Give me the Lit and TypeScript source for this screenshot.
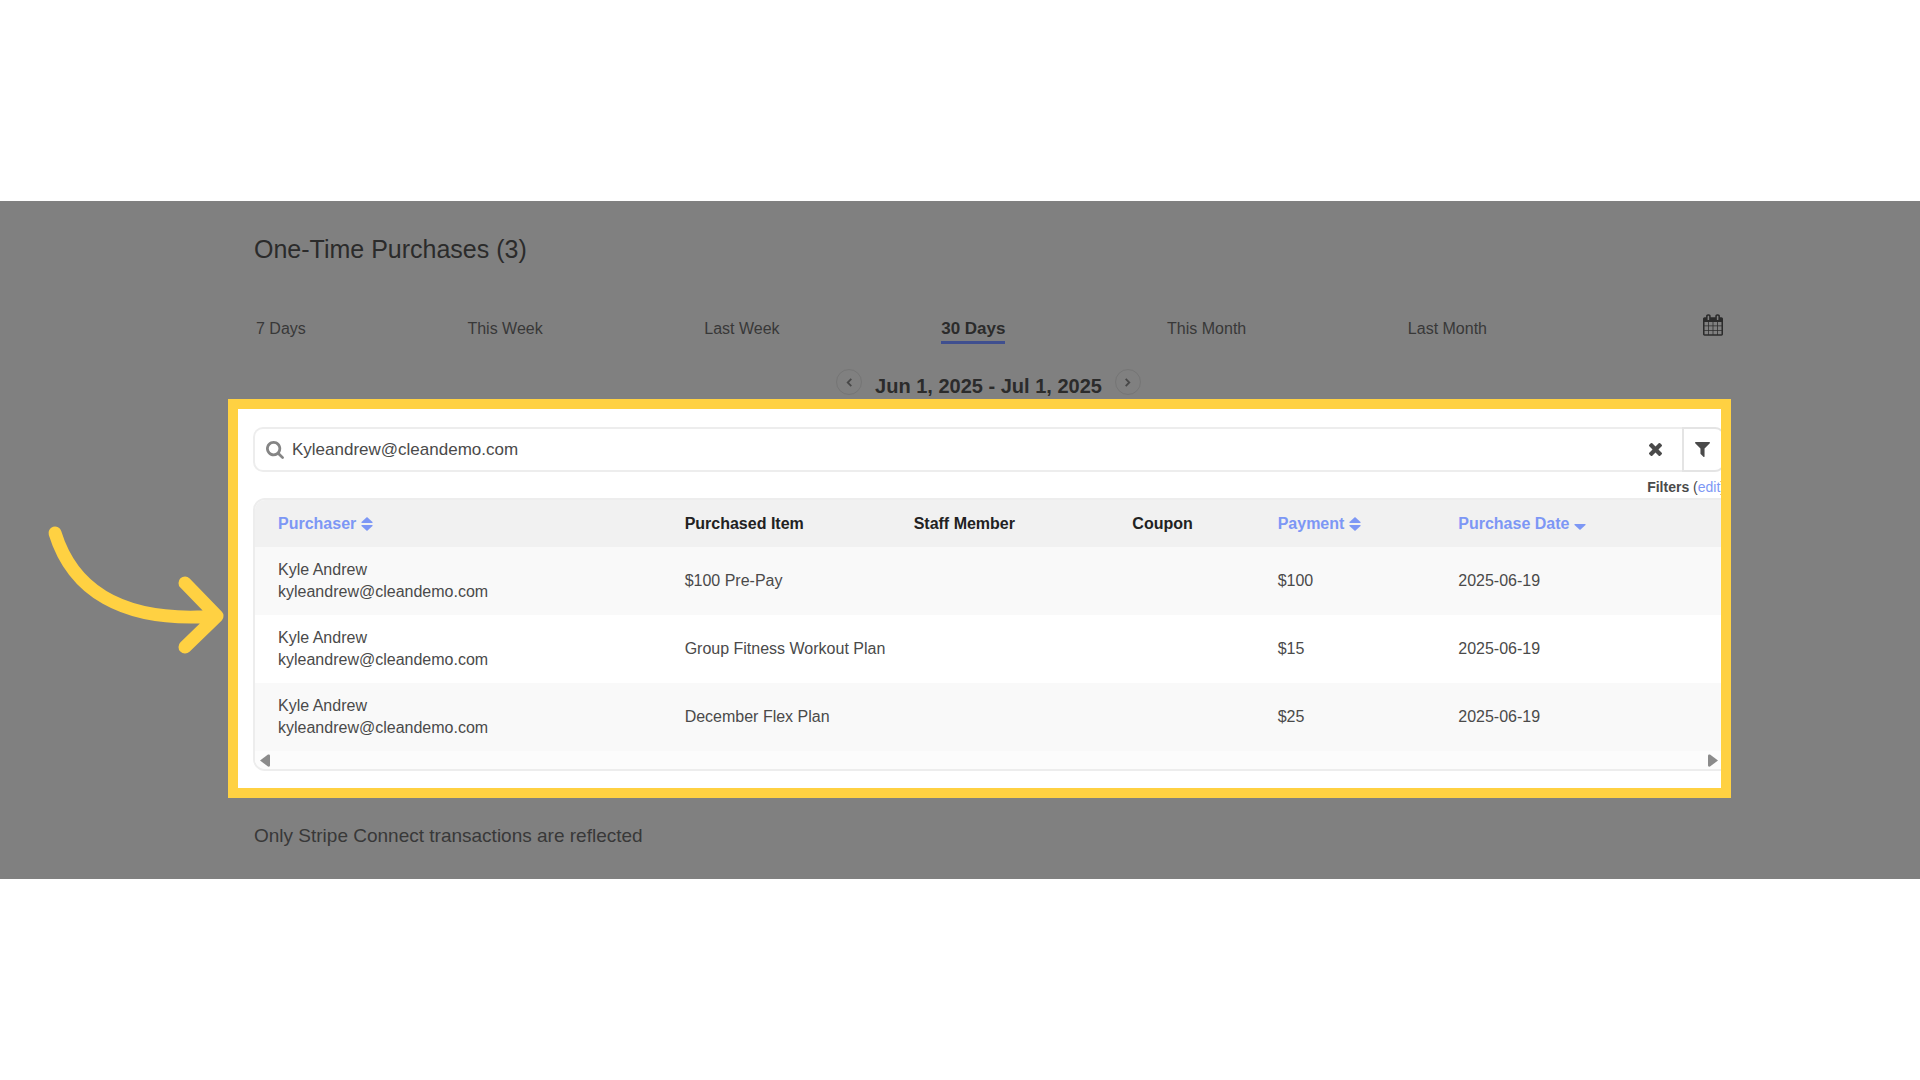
import { LitElement, html, css, svg, nothing } from "lit";
import { customElement, state } from "lit/decorators.js";
import { classMap } from "lit/directives/class-map.js";

interface Purchase {
  name: string;
  email: string;
  item: string;
  staff: string;
  coupon: string;
  payment: string;
  date: string;
}

interface Column {
  label: string;
  size: string;
  sort?: "both" | "down";
}

const RANGES = ["7 Days", "This Week", "Last Week", "30 Days", "This Month", "Last Month"];

const COLUMNS: Column[] = [
  { label: "Purchaser", size: "purchaser", sort: "both" },
  { label: "Purchased Item", size: "item" },
  { label: "Staff Member", size: "staff" },
  { label: "Coupon", size: "coupon" },
  { label: "Payment", size: "payment", sort: "both" },
  { label: "Purchase Date", size: "date", sort: "down" },
];

const person = { name: "Kyle Andrew", email: "kyleandrew@cleandemo.com", staff: "", coupon: "", date: "2025-06-19" };

const PURCHASES: Purchase[] = [
  { ...person, item: "$100 Pre-Pay", payment: "$100" },
  { ...person, item: "Group Fitness Workout Plan", payment: "$15" },
  { ...person, item: "December Flex Plan", payment: "$25" },
];

const calendarIcon = html`<svg class="icon calendar" viewBox="0 0 1664 1792" aria-hidden="true">
  <path d="M128 1664h288v-288h-288v288zm352 0h320v-288h-320v288zm-352-352h288v-320h-288v320zm352 0h320v-320h-320v320zm-352-384h288v-288h-288v288zm736 736h320v-288h-320v288zm-384-736h320v-288h-320v288zm768 736h288v-288h-288v288zm-384-352h320v-320h-320v320zm-352-864v-288q0-13-9.500-22.500t-22.500-9.500h-64q-13 0-22.500 9.500t-9.500 22.500v288q0 13 9.500 22.500t22.500 9.500h64q13 0 22.500-9.500t9.500-22.500zm736 864h288v-320h-288v320zm-384-384h320v-288h-320v288zm384 0h288v-288h-288v288zm32-480v-288q0-13-9.500-22.500t-22.500-9.500h-64q-13 0-22.500 9.500t-9.500 22.500v288q0 13 9.500 22.500t22.500 9.500h64q13 0 22.500-9.500t9.500-22.500zm384-64v1280q0 52-38 90t-90 38h-1408q-52 0-90-38t-38-90v-1280q0-52 38-90t90-38h128v-96q0-66 47-113t113-47h64q66 0 113 47t47 113v96h384v-96q0-66 47-113t113-47h64q66 0 113 47t47 113v96h128q52 0 90 38t38 90z"/>
</svg>`;

const searchIcon = html`<svg class="icon search" viewBox="64 128 1664 1664" aria-hidden="true">
  <path d="M1216 832q0-185-131.500-316.500t-316.500-131.500-316.500 131.500-131.500 316.500 131.500 316.500 316.500 131.500 316.500-131.500 131.500-316.500zm512 832q0 52-38 90t-90 38q-54 0-90-38l-343-342q-179 124-399 124-143 0-273.500-55.500t-225-150-150-225-55.500-273.500 55.500-273.500 150-225 225-150 273.500-55.500 273.500 55.500 225 150 150 225 55.500 273.500q0 220-124 399l343 343q37 37 37 90z"/>
</svg>`;

const clearIcon = html`<svg class="icon clear" viewBox="302 366 1188 1188" aria-hidden="true">
  <path d="M1490 1322q0 40-28 68l-136 136q-28 28-68 28t-68-28l-294-294-294 294q-28 28-68 28t-68-28l-136-136q-28-28-28-68t28-68l294-294-294-294q-28-28-28-68t28-68l136-136q28-28 68-28t68 28l294 294 294-294q28-28 68-28t68 28l136 136q28 28 28 68t-28 68l-294 294 294 294q28 28 28 68z"/>
</svg>`;

const filterIcon = html`<svg class="icon filter" viewBox="192 256 1408 1408" aria-hidden="true">
  <path d="M1595 295q17 41-14 70l-493 493v742q0 42-39 59-13 5-25 5-27 0-45-19l-256-256q-19-19-19-45v-486l-493-493q-31-29-14-70 17-39 59-39h1280q42 0 59 39z"/>
</svg>`;

const chevron = (d: string) => html`<svg class="chevron" viewBox="0 0 10 10" aria-hidden="true"><path d=${d}/></svg>`;

const sortIcon = (kind: "both" | "down") => html`<svg class="icon sort" viewBox="0 0 12 14" aria-hidden="true">
  ${kind === "both"
    ? svg`<path d="M6 0 11.500 5Q12 6 11 6H1Q0 6 .5 5Z"/><path d="M6 14 .5 9Q0 8 1 8H11Q12 8 11.500 9Z"/>`
    : svg`<path d="M6 13 .5 8Q0 7 1 7H11Q12 7 11.500 8Z"/>`}
</svg>`;

@customElement("app-root")
export class AppRoot extends LitElement {
  @state() private range = "30 Days";
  @state() private query = "Kyleandrew@cleandemo.com";

  static styles = css`
    :host {
      display: flex;
      flex-direction: column;
      justify-content: center;
      min-height: 100vh;
      background: #fff;
      color: #4a4a4a;
      font: 16px/22px "Liberation Sans", Arial, sans-serif;
    }
    * { box-sizing: border-box; }
    button, input { font: inherit; color: inherit; background: none; border: 0; padding: 0; margin: 0; }
    button { cursor: pointer; }
    a { color: #7d97f5; text-decoration: none; }
    .icon { display: block; fill: currentColor; }
    .report {
      position: relative;
      padding: 32px 189px 31px 228px;
      background: #808080;
      color: #383838;
    }
    .top { padding: 0 8px 0 26px; }
    .title { margin: 0; font-size: 25px; line-height: 32px; font-weight: 400; color: #2b2b2b; }
    .ranges { display: flex; align-items: flex-start; gap: 216px; margin-top: 52px; padding-left: 2px; }
    .tabs { flex: 1; display: flex; justify-content: space-between; }
    .tab { line-height: 24px; border-bottom: 3px solid transparent; }
    .tab.active { font-size: 17px; font-weight: 700; color: #2b2b2b; border-color: #3f4f8f; }
    .calendar { width: 20px; height: 22px; color: #2b2b2b; }
    .ranges > button { margin-top: -3px; }
    .period { display: flex; justify-content: center; gap: 13px; height: 30px; margin-top: 25px; }
    .period-label { align-self: flex-end; font-size: 20px; line-height: 26px; font-weight: 700; color: #2b2b2b; }
    .step { display: grid; place-items: center; width: 26px; height: 26px; border: 1px solid #757575; border-radius: 50%; color: #484848; }
    .chevron { width: 9px; height: 9px; fill: none; stroke: currentColor; stroke-width: 2; }
    .spotlight {
      overflow: hidden;
      padding: 18px 0 17px 15px;
      border: 10px solid #ffd142;
      background: #fff;
      color: #4a4a4a;
    }
    .results { margin-right: -4px; }
    .searchbar { display: flex; height: 45px; }
    .field {
      flex: 1; display: flex; align-items: center; gap: 8px; padding: 0 20px 0 11px;
      border: 2px solid #ededed; border-right: 0; border-radius: 10px 0 0 10px;
    }
    .search { width: 18px; height: 18px; color: #858585; }
    .query { flex: 1; min-width: 0; font-size: 17px; outline: 0; }
    .clear { width: 13px; height: 13px; }
    .filter { width: 15px; height: 15px; }
    .filter-button { display: grid; place-items: center; width: 43px; padding-right: 2px; border: 2px solid #e4e4e4; border-radius: 0 10px 10px 0; }
    .filters { padding-top: 5px; text-align: right; font-size: 14px; line-height: 21px; }
    .grid { overflow: hidden; border: 2px solid #ededed; border-radius: 12px 0 0 12px; }
    .purchases { width: 100%; table-layout: fixed; border-collapse: collapse; }
    th, td { padding: 12px 0 12px 23px; text-align: left; white-space: nowrap; }
    th { height: 47px; padding-block: 0; font-weight: 700; color: #222; background: #f1f1f1; }
    tr.row:nth-child(odd) { background: #f9f9f9; }
    .sorter { display: inline-flex; align-items: center; gap: 5px; font-weight: 700; color: #7d97f5; }
    .sort { width: 12px; height: 14px; }
    .col-purchaser { width: 27.7%; }
    .col-item { width: 15.6%; }
    .col-staff { width: 14.9%; }
    .col-coupon { width: 9.9%; }
    .col-payment { width: 12.3%; }
    .email { display: block; }
    .scroller { display: flex; justify-content: space-between; align-items: center; height: 18px; padding: 0 5px; background: #fcfcfc; color: #8b8b8b; }
    .nudge { width: 10px; height: 13px; }
    .note { margin: 26px 26px 0; font-size: 19px; line-height: 24px; }
    .pointer { position: absolute; left: 40px; top: 319px; width: 188px; height: 141px; fill: none; stroke: #ffd142; stroke-width: 13; stroke-linecap: round; stroke-linejoin: round; }
  `;

  private heading(column: Column) {
    return html`<th scope="col">
      ${column.sort
        ? html`<button class="sorter" type="button">${column.label}${sortIcon(column.sort)}</button>`
        : column.label}
    </th>`;
  }

  render() {
    return html`
      <main class="report">
        <header class="top">
          <h1 class="title">One-Time Purchases (${PURCHASES.length})</h1>
          <nav class="ranges" aria-label="Date range">
            <div class="tabs">
              ${RANGES.map((label) => html`<button
                type="button"
                class=${classMap({ tab: true, active: label === this.range })}
                @click=${() => (this.range = label)}
              >${label}</button>`)}
            </div>
            <button type="button" aria-label="Pick dates">${calendarIcon}</button>
          </nav>
          <div class="period">
            <button class="step" type="button" aria-label="Previous period">${chevron("M7 1 3 5 7 9")}</button>
            <span class="period-label">Jun 1, 2025 - Jul 1, 2025</span>
            <button class="step" type="button" aria-label="Next period">${chevron("M3 1 7 5 3 9")}</button>
          </div>
        </header>

        <section class="spotlight">
          <div class="results">
            <div class="searchbar">
              <label class="field">
                ${searchIcon}
                <input
                  class="query"
                  type="text"
                  aria-label="Search purchases"
                  .value=${this.query}
                  @input=${(e: Event) => (this.query = (e.target as HTMLInputElement).value)}
                />
                ${this.query
                  ? html`<button type="button" aria-label="Clear search" @click=${() => (this.query = "")}>${clearIcon}</button>`
                  : nothing}
              </label>
              <button class="filter-button" type="button" aria-label="Filter">${filterIcon}</button>
            </div>
            <div class="filters"><strong>Filters</strong> (<a href="#filters">edit</a>)</div>
            <div class="grid">
              <table class="purchases">
                <colgroup>${COLUMNS.map((c) => html`<col class="col-${c.size}" />`)}</colgroup>
                <thead><tr>${COLUMNS.map((c) => this.heading(c))}</tr></thead>
                <tbody>
                  ${PURCHASES.map((p) => html`<tr class="row">
                    <td>${p.name}<span class="email">${p.email}</span></td>
                    <td>${p.item}</td>
                    <td>${p.staff}</td>
                    <td>${p.coupon}</td>
                    <td>${p.payment}</td>
                    <td>${p.date}</td>
                  </tr>`)}
                </tbody>
              </table>
              <div class="scroller">
                <button type="button" aria-label="Scroll left"><svg class="icon nudge" viewBox="0 0 10 13"><path d="M0 6.500 8 .5Q10 0 10 1.500V11.500Q10 13 8 12.500Z"/></svg></button>
                <button type="button" aria-label="Scroll right"><svg class="icon nudge" viewBox="0 0 10 13"><path d="M10 6.500 2 .5Q0 0 0 1.500V11.500Q0 13 2 12.500Z"/></svg></button>
              </div>
            </div>
          </div>
        </section>

        <p class="note">Only Stripe Connect transactions are reflected</p>

        <svg class="pointer" viewBox="40 520 188 141" aria-hidden="true">
          <path d="M55 533C72 588 120 624 217 616M185 583 217 616 185 647"/>
        </svg>
      </main>
    `;
  }
}
